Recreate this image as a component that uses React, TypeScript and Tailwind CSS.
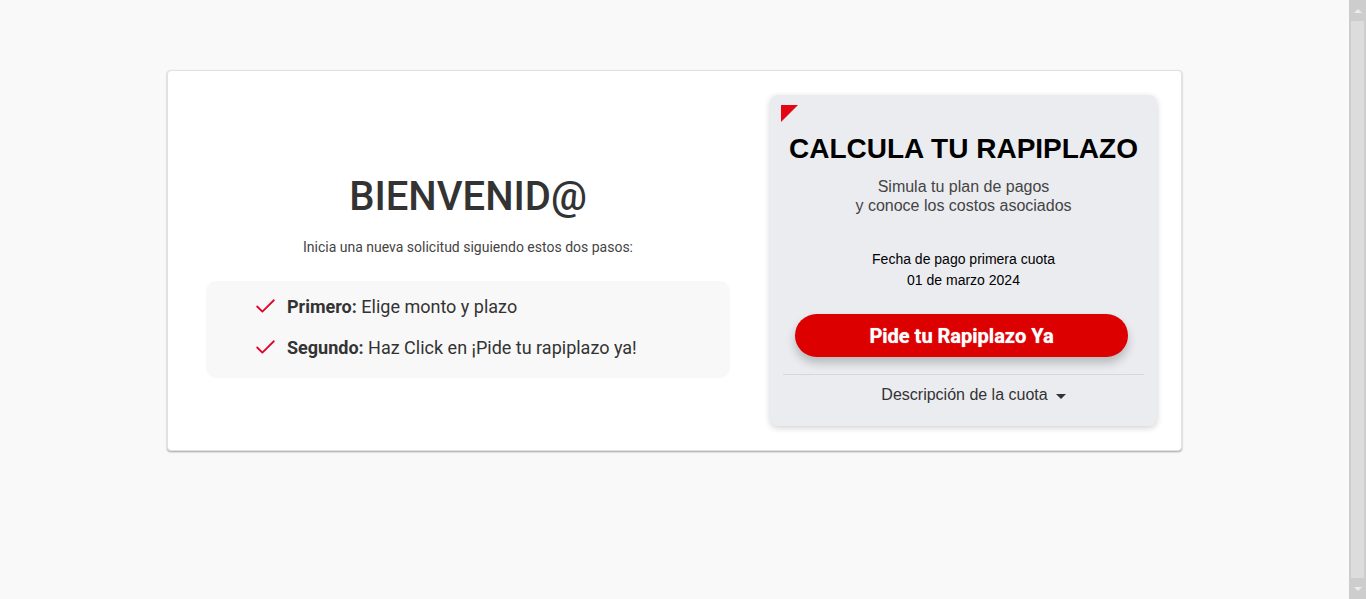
import { Check } from 'lucide-react';

function Steps() {
  return (
    <div className="bg-[#f8f8f8] rounded-[10px] pt-[13px] pb-[18px] pl-[47px] pr-4 flex flex-col gap-[16px]">
      <div className="flex items-center gap-[9px] text-[18px] leading-[24px] text-[#333]">
        <Check className="w-[25px] h-[25px] text-[#e4002b]" strokeWidth={1.7} />
        <span><b className="font-bold">Primero:</b> Elige monto y plazo</span>
      </div>
      <div className="flex items-center gap-[9px] text-[18px] leading-[24px] text-[#333]">
        <Check className="w-[25px] h-[25px] text-[#e4002b]" strokeWidth={1.7} />
        <span><b className="font-bold">Segundo:</b> Haz Click en ¡Pide tu rapiplazo ya!</span>
      </div>
    </div>
  );
}

function Calculator() {
  return (
    <div className="relative w-[387px] bg-[#ebecf0] rounded-lg shadow-[0_2px_6px_rgba(0,0,0,0.18)] px-[13px] pt-[35px] pb-[20px] font-['Liberation_Sans',Arial,sans-serif]">
      <div className="absolute left-[11px] top-[10px] w-0 h-0 border-t-[17px] border-t-[#e30613] border-r-[17px] border-r-transparent" />
      <h2 className="text-center text-[28px] leading-[38px] font-bold text-black">CALCULA TU RAPIPLAZO</h2>
      <p className="text-center text-[16px] leading-[19px] text-[#444] mt-[9px]">
        Simula tu plan de pagos<br />y conoce los costos asociados
      </p>
      <div className="text-center text-[14px] leading-[21px] text-black mt-[34px]">
        <div>Fecha de pago primera cuota</div>
        <div>01 de marzo 2024</div>
      </div>
      <div className="pl-[12px] mt-[23px]">
        <button className="w-[333px] h-[43px] rounded-full bg-[#dc0000] text-white text-[20px] font-bold font-['Roboto',sans-serif] shadow-[0_6px_10px_rgba(0,0,0,0.22)] [text-shadow:0_0_1px_rgba(255,255,255,0.8)]">
          Pide tu Rapiplazo Ya
        </button>
      </div>
      <div className="border-t border-[#d9d6d6] mt-[17px] pt-[9px] pl-[20px] flex justify-center items-center gap-[8px] text-[16px] leading-[22px] text-[#333]">
        <span>Descripción de la cuota</span>
        <span className="w-0 h-0 border-l-[5px] border-r-[5px] border-t-[5px] border-l-transparent border-r-transparent border-t-[#333] mt-[2px]" />
      </div>
    </div>
  );
}

export default function App() {
  return (
    <div className="flex h-[599px] w-full bg-[#f9f9f9] font-['Roboto',sans-serif] overflow-hidden">
      <main className="flex-1 pt-[70px]">
        <div className="mx-auto w-[1015px] bg-white rounded border border-[#e2e2e2] shadow-[0_1px_2px_rgba(0,0,0,0.35)] p-6 flex gap-[26px]">
          <div className="flex-1 pt-[78px] flex flex-col items-center">
            <h1 className="text-[40px] leading-[48px] font-medium text-[#333]">BIENVENID@</h1>
            <p className="text-[14px] leading-[20px] text-[#444] mt-[16px]">Inicia una nueva solicitud siguiendo estos dos pasos:</p>
            <div className="w-full px-[14px] mt-[24px]">
              <Steps />
            </div>
          </div>
          <Calculator />
        </div>
      </main>
      <div className="w-[17px] bg-[#cdcdcd] flex flex-col items-center">
        <div className="h-[21px] flex items-center justify-center">
          <span className="w-0 h-0 border-l-[4px] border-r-[4px] border-b-[4px] border-l-transparent border-r-transparent border-b-[#ececec]" />
        </div>
        <div className="flex-1 w-[13px] bg-[#dcdcdc]" />
        <div className="h-[21px] flex items-center justify-center">
          <span className="w-0 h-0 border-l-[4px] border-r-[4px] border-t-[4px] border-l-transparent border-r-transparent border-t-[#ececec]" />
        </div>
      </div>
    </div>
  );
}
